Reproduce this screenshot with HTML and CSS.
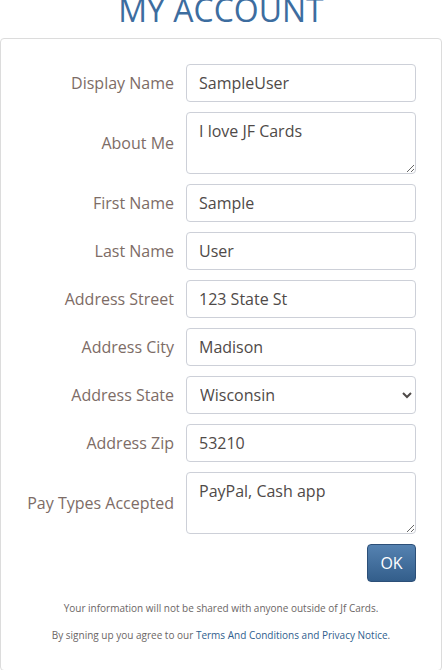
FILE: index.html
```html
<!DOCTYPE html>
<html>
<head>
<meta charset="utf-8">
<link rel="stylesheet" href="styles.css">
</head>
<body>
<h1 class="title">MY ACCOUNT</h1>
<div class="card">
  <form class="form">
    <div class="row"><label class="lbl">Display Name</label><input class="ctl" type="text" value="SampleUser"></div>
    <div class="row"><label class="lbl">About Me</label><textarea class="ctl area">I love JF Cards</textarea></div>
    <div class="row"><label class="lbl">First Name</label><input class="ctl" type="text" value="Sample"></div>
    <div class="row"><label class="lbl">Last Name</label><input class="ctl" type="text" value="User"></div>
    <div class="row"><label class="lbl">Address Street</label><input class="ctl" type="text" value="123 State St"></div>
    <div class="row"><label class="lbl">Address City</label><input class="ctl" type="text" value="Madison"></div>
    <div class="row"><label class="lbl">Address State</label><select class="ctl sel"><option>Wisconsin</option></select></div>
    <div class="row"><label class="lbl">Address Zip</label><input class="ctl" type="text" value="53210"></div>
    <div class="row"><label class="lbl">Pay Types Accepted</label><textarea class="ctl area">PayPal, Cash app</textarea></div>
    <div class="actions"><button class="ok" type="button">OK</button></div>
  </form>
  <p class="note">Your information will not be shared with anyone outside of Jf Cards.</p>
  <p class="note">By signing up you agree to our <a class="link" href="#">Terms And Conditions and Privacy Notice</a>.</p>
</div>
</body>
</html>
```
FILE: styles.css
```css
* { box-sizing: border-box; }
html, body { margin: 0; padding: 0; background: #fff; }
body { font-family: "Open Sans", "Liberation Sans", sans-serif; width: 442px; }
.title {
  margin: -12px 0 0;
  text-align: center;
  font-weight: 400;
  font-size: 32px;
  line-height: 44px;
  color: #3d6d9f;
  height: 50px;
}
.card {
  border: 1px solid #dcdcdc;
  border-radius: 4px;
  width: 442px;
  padding: 25px 25px 14px 0;
}
.form { display: flex; flex-direction: column; gap: 10px; }
.row { display: flex; align-items: center; }
.lbl {
  width: 173px;
  padding-right: 0;
  margin-right: 12px;
  text-align: right;
  font-size: 16px;
  color: #7d6c66;
}
.ctl {
  width: 230px;
  height: 38px;
  border: 1px solid #cdd0d8;
  border-radius: 4px;
  padding: 6px 12px;
  font-family: "Open Sans", "Liberation Sans", sans-serif;
  font-size: 16px;
  color: #4f4a48;
  background: #fff;
}
.area { height: 62px; padding-top: 7px; resize: vertical; }
.sel { padding-left: 9px; }
.actions { display: flex; justify-content: flex-end; }
.ok {
  width: 49px;
  height: 38px;
  border: 1px solid #2c4f78;
  border-radius: 4px;
  background: linear-gradient(#5582b1, #335e8b);
  color: #fff;
  font-family: "Open Sans", "Liberation Sans", sans-serif;
  font-size: 16px;
  padding: 0;
}
.note {
  margin: 0;
  text-align: center;
  font-size: 10px;
  color: #6b6665;
  padding-left: 25px;
}
.note:first-of-type { margin-top: 19px; }
.note + .note { margin-top: 13px; margin-bottom: 14px; }
.link { color: #2f5e8e; text-decoration: none; }
```
